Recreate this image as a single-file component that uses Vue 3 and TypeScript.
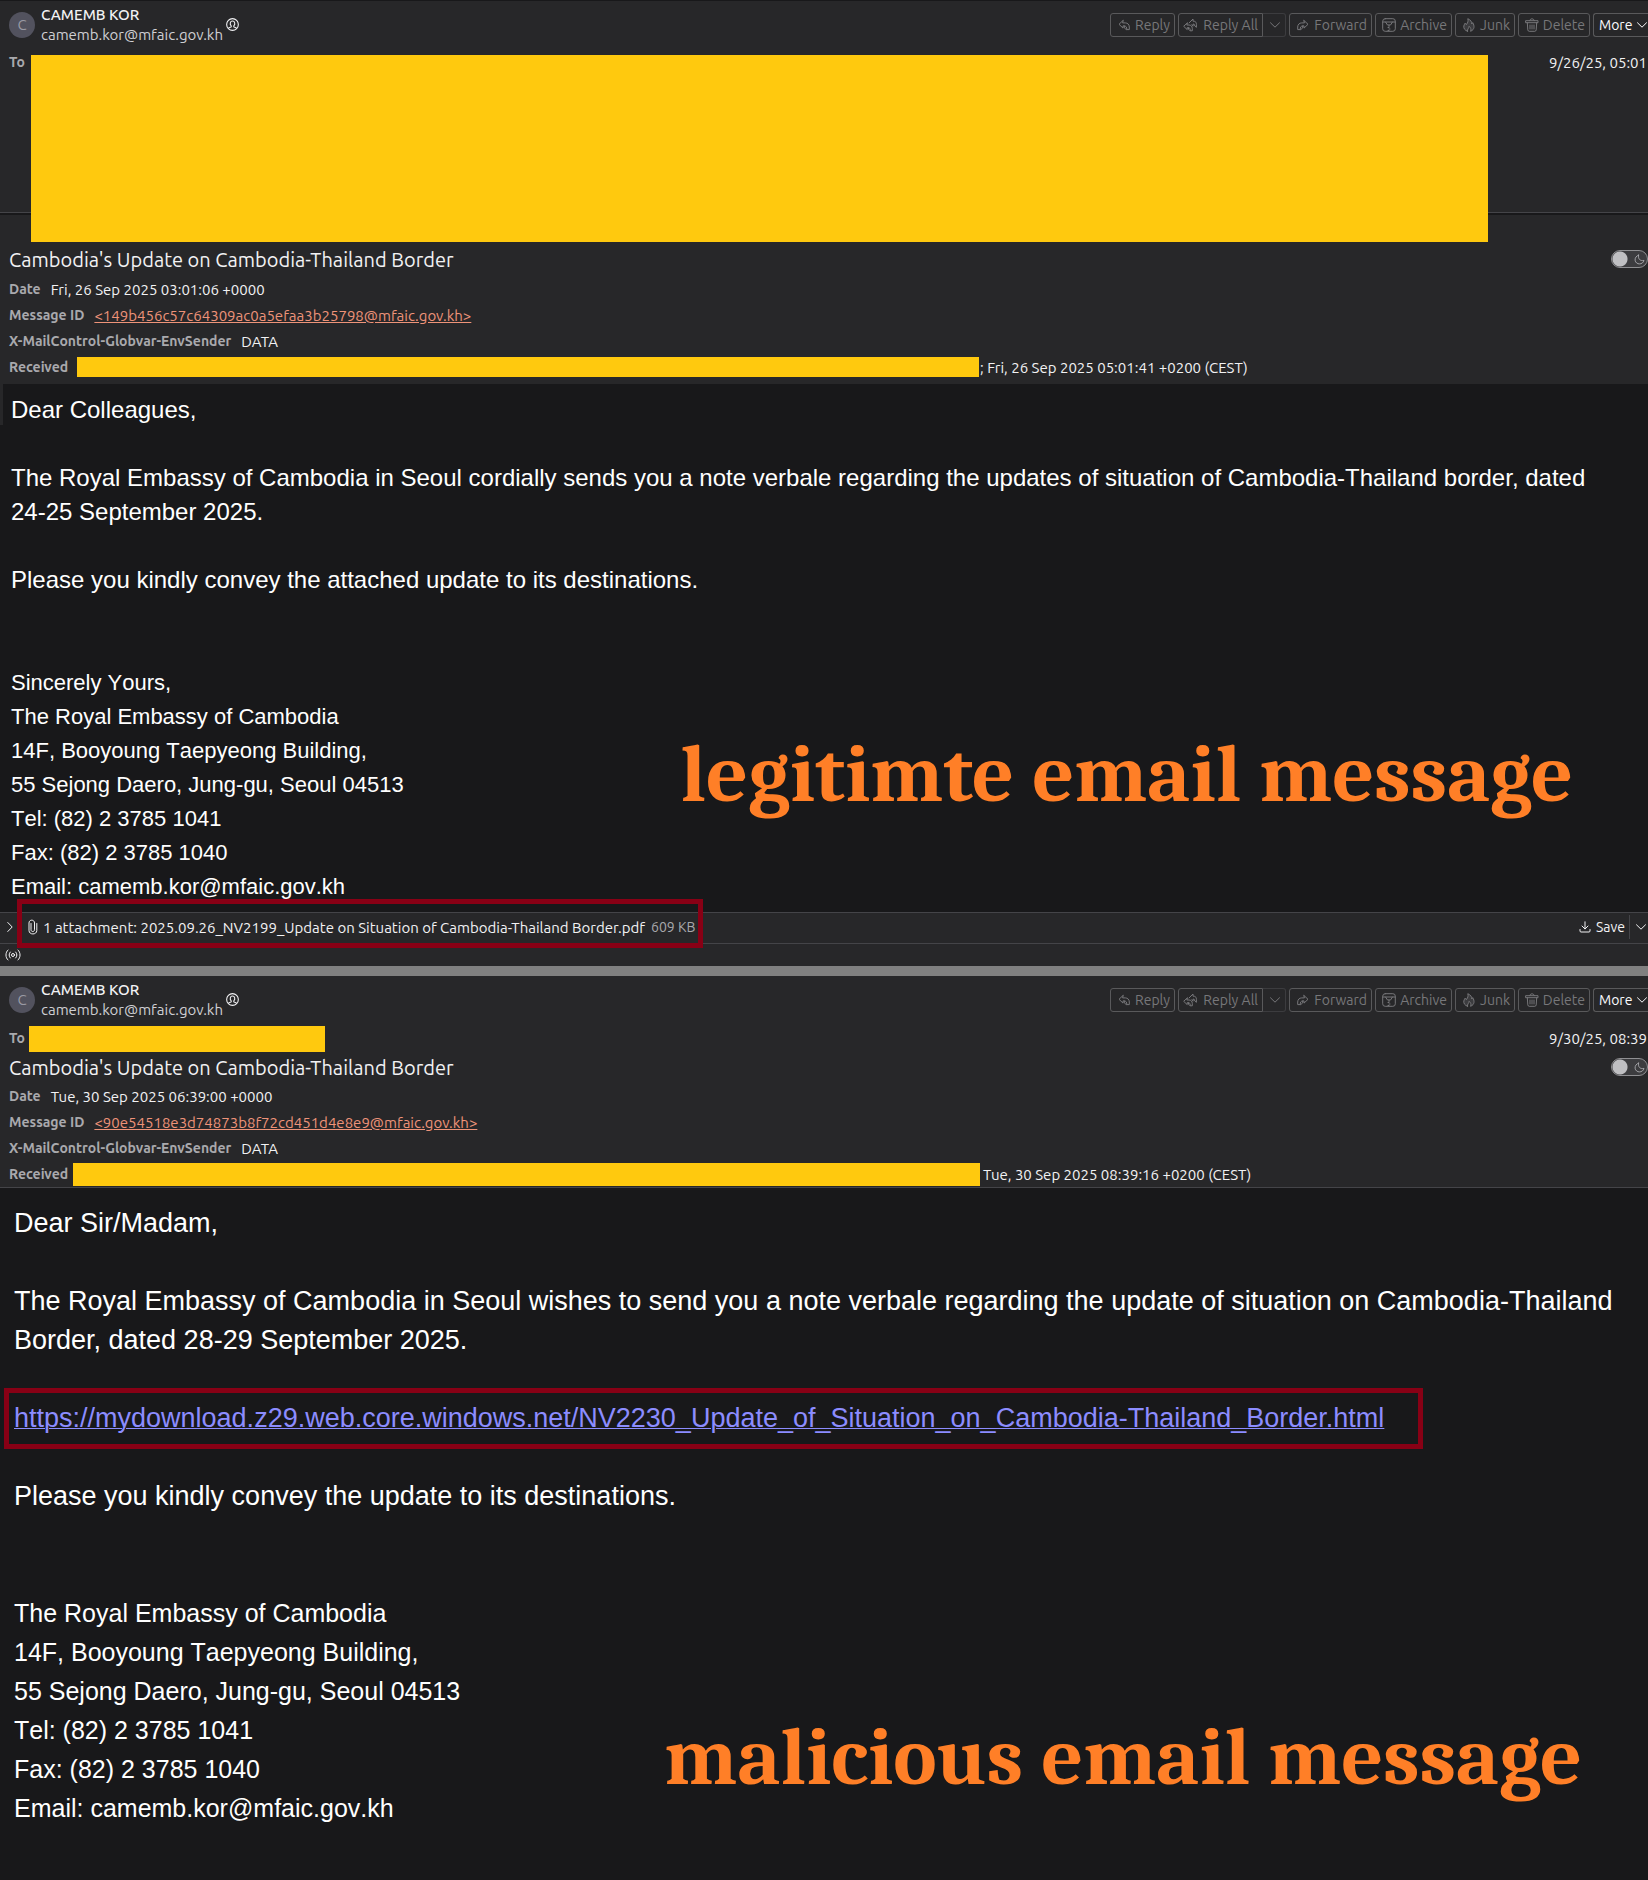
<script setup lang="ts">
interface HeaderField {
  label: string
  value: string
  link?: boolean
}

interface Mail {
  id: string
  variant: 'first' | 'second'
  received: string
  fields: HeaderField[]
  stamp: string
  intro: string[]
  url?: string
  closing: string
  signature: string[]
  attachment?: { name: string; size: string }
  note: string
}

const address = [
  'The Royal Embassy of Cambodia',
  '14F, Booyoung Taepyeong Building,',
  '55 Sejong Daero, Jung-gu, Seoul 04513',
  'Tel: (82) 2 3785 1041',
  'Fax: (82) 2 3785 1040',
  'Email: camemb.kor@mfaic.gov.kh',
]

const mails: Mail[] = [
  {
    id: 'm1',
    variant: 'first',
    received: '9/26/25, 05:01',
    fields: [
      { label: 'Date', value: 'Fri, 26 Sep 2025 03:01:06 +0000' },
      { label: 'Message ID', value: '<149b456c57c64309ac0a5efaa3b25798@mfaic.gov.kh>', link: true },
      { label: 'X-MailControl-Globvar-EnvSender', value: 'DATA' },
    ],
    stamp: '; Fri, 26 Sep 2025 05:01:41 +0200 (CEST)',
    intro: [
      'Dear Colleagues,',
      'The Royal Embassy of Cambodia in Seoul cordially sends you a note verbale regarding the updates of situation of Cambodia-Thailand border, dated 24-25 September 2025.',
    ],
    closing: 'Please you kindly convey the attached update to its destinations.',
    signature: ['Sincerely Yours,', ...address],
    attachment: {
      name: '2025.09.26_NV2199_Update on Situation of Cambodia-Thailand Border.pdf',
      size: '609 KB',
    },
    note: 'legitimte email message',
  },
  {
    id: 'm2',
    variant: 'second',
    received: '9/30/25, 08:39',
    fields: [
      { label: 'Date', value: 'Tue, 30 Sep 2025 06:39:00 +0000' },
      { label: 'Message ID', value: '<90e54518e3d74873b8f72cd451d4e8e9@mfaic.gov.kh>', link: true },
      { label: 'X-MailControl-Globvar-EnvSender', value: 'DATA' },
    ],
    stamp: 'Tue, 30 Sep 2025 08:39:16 +0200 (CEST)',
    intro: [
      'Dear Sir/Madam,',
      'The Royal Embassy of Cambodia in Seoul wishes to send you a note verbale regarding the update of situation on Cambodia-Thailand Border, dated 28-29 September 2025.',
    ],
    url: 'https://mydownload.z29.web.core.windows.net/NV2230_Update_of_Situation_on_Cambodia-Thailand_Border.html',
    closing: 'Please you kindly convey the update to its destinations.',
    signature: address,
    note: 'malicious email message',
  },
]
</script>

<template>
  <main class="page">
    <article v-for="mail in mails" :key="mail.id" class="mail" :class="mail.variant">
      <header class="head">
        <div class="sender">
          <span class="avatar">C</span>
          <div class="who">
            <strong>CAMEMB KOR</strong>
            <span>camemb.kor@mfaic.gov.kh</span>
          </div>
          <svg class="contact" viewBox="0 0 12 12" aria-hidden="true">
            <circle cx="6" cy="6" r="5.400" />
            <path d="M2.400 9.400C3 8.600 4 8.600 4.800 8.200V7.200C3.200 5.600 3.800 2.800 6 2.800S8.800 5.600 7.200 7.200V8.200C8 8.600 9 8.600 9.600 9.400" />
          </svg>
          <div class="tools">
            <button class="btn reply" type="button" disabled>
              <svg viewBox="0 0 14 14"><path d="M6 2.500 2 6.300l4 3.800V7.900h1.300v2l2 1.700h3V9C12.300 6.500 10.500 4.900 8.300 4.900H6ZM7.300 7.900c1.800 0 2.500 1.200 2.500 3.400" /></svg>
              Reply
            </button>
            <span class="split">
              <button class="btn reply-all" type="button" disabled>
                <svg viewBox="0 0 14 14"><path d="M4.200 5 .7 8.300l3.500 3.300V9.700h1.300v1.500l1.600 1.600h2.200v-2.300C9.300 8.300 7.800 7 6 7H4.200ZM5.500 9.700c1.300 0 1.800.8 1.800 2.500M6 5l4-4v2.200h1.200c1.500.3 2.200 1.400 2.200 3.100v3L11.800 8l-.5-1.600L10 6v2.200L8.700 6.800" /></svg>
                Reply All
              </button>
              <button class="btn drop" type="button" disabled aria-label="Reply options">
                <svg viewBox="0 0 12 12"><path d="m1.500 3.800 4.500 4.400 4.500-4.400" /></svg>
              </button>
            </span>
            <button class="btn forward" type="button" disabled>
              <svg viewBox="0 0 14 14"><path d="m8 2.500 4 3.800-4 3.800V7.900H6.700v2l-2 1.700h-3V9C1.700 6.500 3.500 4.900 5.700 4.900H8ZM6.700 7.900c-1.800 0-2.500 1.200-2.500 3.400" /></svg>
              Forward
            </button>
            <button class="btn archive" type="button" disabled>
              <svg viewBox="0 0 14 14"><rect x=".7" y=".7" width="12.600" height="12.600" rx="2.500" /><path d="M.7 4h12.600M3.500 4l2 3h3l2-3M7 7v1.500M6 9.500h1M7 11h1M6 12.500h1" /></svg>
              Archive
            </button>
            <button class="btn junk" type="button" disabled>
              <svg viewBox="0 0 14 14"><path class="tint" d="M5.500 13.300C2.800 12.300 1.500 10.500 1.800 8c.3-1.400 1-2.200 1.500-3 .6.500.9 1 1 1.700C5.800 5 6.500 3 5.800.7c3 1.300 4 3.200 4 5.300l.9-1.400c2 3.200 2 7-2.100 8.700.8-2 .3-3.400-1.500-5C7 10.500 5 11 5.500 13.300Z" /></svg>
              Junk
            </button>
            <button class="btn delete" type="button" disabled>
              <svg viewBox="0 0 14 14"><path d="M1 2.700h12v2H1ZM4.700 2.700c0-2.600 4.600-2.600 4.600 0M2.300 4.700l.5 7.200c.1.900.7 1.400 1.400 1.400h5.600c.7 0 1.300-.5 1.400-1.400l.5-7.200M5 7v4M7 7v4M9 7v4" /></svg>
              Delete
            </button>
            <button class="btn more" type="button">
              More
              <svg viewBox="0 0 12 12"><path d="m1.500 3.800 4.500 4.400 4.500-4.400" /></svg>
            </button>
          </div>
        </div>

        <div class="to-row">
          <b>To</b>
          <span class="redact to-redact"></span>
          <time>{{ mail.received }}</time>
        </div>

        <div class="subject">
          <h2>Cambodia's Update on Cambodia-Thailand Border</h2>
          <label class="switch">
            <input type="checkbox" aria-label="Dark message mode" />
            <svg viewBox="0 0 12 12" aria-hidden="true"><path d="M5 1.200C4 5 6.500 8 10.900 7 9.800 12 2 12.200 1.200 6.800 1 4.200 2.500 2 5 1.200Z" /></svg>
          </label>
        </div>

        <div v-for="f in mail.fields" :key="f.label" class="field">
          <b>{{ f.label }}</b>
          <a v-if="f.link" href="#">{{ f.value }}</a>
          <span v-else>{{ f.value }}</span>
        </div>
        <div class="field received">
          <b>Received</b>
          <span class="redact"></span>
          <span>{{ mail.stamp }}</span>
        </div>
      </header>

      <section class="body">
        <p v-for="line in mail.intro" :key="line">{{ line }}</p>
        <p v-if="mail.url"><a class="url marked" href="#">{{ mail.url }}</a></p>
        <p>{{ mail.closing }}</p>
        <address>
          <span v-for="line in mail.signature" :key="line">{{ line }}</span>
        </address>
        <div class="note">{{ mail.note }}</div>
      </section>

      <footer v-if="mail.attachment">
        <div class="attach-bar">
          <button class="expand" type="button" aria-label="Show attachments">
            <svg viewBox="0 0 12 12"><path d="m3.800 1.500 4.400 4.500-4.400 4.500" /></svg>
          </button>
          <span class="attachment marked">
            <svg class="clip" viewBox="0 0 10 16"><path d="M3 4.500v6.300c0 2.300 3.500 2.300 3.500 0V4C6.500.200 1 .200 1 4v7.500c0 4.600 7.800 4.600 7.800 0V4.500" /></svg>
            <span>1 attachment: {{ mail.attachment.name }}</span>
            <small>{{ mail.attachment.size }}</small>
          </span>
          <button class="save" type="button">
            <svg viewBox="0 0 12 12"><path d="M6 .8v7M3 5l3 3 3-3M1 8.500V10c0 .7.400 1 1 1h8c.6 0 1-.3 1-1V8.500" /></svg>
            Save
          </button>
          <button class="save-drop" type="button" aria-label="Save options">
            <svg viewBox="0 0 12 12"><path d="m1.500 3.800 4.500 4.400 4.500-4.400" /></svg>
          </button>
        </div>
        <div class="status">
          <svg viewBox="0 0 16 12"><circle cx="8" cy="6" r="1.500" /><path d="M5.300 3C3.700 4.500 3.700 7.500 5.300 9M10.700 3c1.600 1.500 1.600 4.500 0 6M3 1C.2 3.500.2 8.500 3 11M13 1c2.800 2.500 2.800 7.500 0 10" /></svg>
        </div>
      </footer>
    </article>
  </main>
</template>

<style>
body {
  margin: 0;
  background: #18181a;
}
</style>

<style scoped>
.page {
  display: flex;
  flex-direction: column;
  min-height: 100vh;
  overflow: hidden;
  color: #f2f2f4;
  background: #18181a;
  font-family: Ubuntu, "Noto Sans", sans-serif;
  font-size: 15px;
}
svg {
  flex: none;
  fill: none;
  stroke: currentColor;
  stroke-linecap: round;
  stroke-linejoin: round;
}
button {
  font: inherit;
  color: inherit;
  background: none;
  border: 0;
  padding: 0;
}
.mail {
  position: relative;
  display: flex;
  flex-direction: column;
}
.second {
  flex: 1;
  border-top: 10px solid #808080;
}
.head {
  background: #272729;
}
.first .head {
  border-top: 1px solid #18181a;
  padding-bottom: 3px;
}
.second .head {
  border-bottom: 1px solid #444448;
}

.sender {
  display: flex;
  align-items: center;
  height: 49px;
  padding: 0 0 2px 9px;
  box-sizing: border-box;
}
.avatar {
  width: 26px;
  height: 26px;
  margin-right: 6px;
  border-radius: 50%;
  background: #52525e;
  color: #9a9aa4;
  line-height: 26px;
  text-align: center;
}
.who {
  display: flex;
  flex-direction: column;
  line-height: 20px;
}
.who strong {
  font-weight: 500;
}
.who span {
  color: #cfcfd3;
}
.contact {
  width: 13px;
  height: 13px;
  margin-left: 3px;
}
.tools {
  display: flex;
  gap: 3px;
  margin-left: auto;
}
.btn {
  display: flex;
  align-items: center;
  justify-content: space-between;
  box-sizing: border-box;
  height: 24px;
  padding: 0 4px 0 6px;
  border: 1px solid #59595b;
  border-radius: 3px;
  color: #77777a;
  font-size: 14px;
  white-space: nowrap;
}
.btn svg {
  width: 14px;
  height: 14px;
}
.tint {
  fill: #3c3c3f;
}
.split {
  display: flex;
}
.reply { width: 65px; }
.reply-all {
  width: 85px;
  padding: 0 4px;
  border-radius: 3px 0 0 3px;
}
.drop {
  width: 23px;
  border-color: #3c3c3f;
  border-left: 0;
  border-radius: 0 3px 3px 0;
}
.btn.drop svg,
.btn.more svg {
  width: 12px;
  height: 12px;
}
.forward { width: 83px; }
.archive { width: 77px; }
.junk { width: 60px; }
.delete { width: 72px; }
.more {
  width: 55px;
  padding: 0 0 0 5px;
  border-right: 0;
  border-radius: 3px 0 0 3px;
  color: #fbfbfe;
}

.to-row {
  display: flex;
  align-items: center;
  height: 24px;
  padding: 0 1px 2px 9px;
}
.first .to-row {
  padding-bottom: 138px;
  border-bottom: 1px solid #444448;
  box-shadow: 0 2px #18181a;
}
.second .to-row {
  margin-top: 1px;
}
b {
  color: #a9a9ad;
  font-size: 14px;
  font-weight: 600;
}
time {
  margin-left: auto;
}
.redact {
  background: #ffc90e;
}
.first .to-redact {
  position: absolute;
  z-index: 1;
  top: 55px;
  left: 31px;
  right: 160px;
  height: 187px;
}
.second .to-redact {
  width: 296px;
  height: 26px;
  margin: 2px 0 0 4px;
}
.subject {
  display: flex;
  align-items: center;
  justify-content: space-between;
  box-sizing: border-box;
  height: 32px;
  padding: 0 0 2px 9px;
}
.first .subject {
  height: 64px;
  padding-top: 30px;
}
h2 {
  margin: 0;
  font-size: 20px;
  font-weight: 400;
}
.switch {
  position: relative;
  display: flex;
  color: #a9a9ad;
}
.switch input {
  appearance: none;
  box-sizing: border-box;
  width: 37px;
  height: 18px;
  margin: 0;
  border: 1px solid #8f8f92;
  border-radius: 9px;
  background: radial-gradient(circle at 8px 8px, #bfbfc2 7px, #3c3c3f 8px);
}
.switch svg {
  position: absolute;
  top: 4px;
  right: 3px;
  width: 11px;
  height: 11px;
}
.field {
  display: flex;
  align-items: center;
  gap: 10px;
  box-sizing: border-box;
  height: 26px;
  padding: 0 0 2px 9px;
  white-space: nowrap;
}
.field a {
  color: #ee9379;
}
.received {
  gap: 0;
}
.received b {
  width: 68px;
}
.received .redact {
  width: 902px;
  height: 20px;
  margin-right: 1px;
}
.second .received {
  height: 25px;
  padding-bottom: 1px;
}
.second .received b {
  width: 64px;
}
.second .received .redact {
  width: 907px;
  height: 23px;
  margin-right: 3px;
}

.body {
  position: relative;
  padding: 9px 32px 8px 11px;
  color: #ffffff;
  font-family: "Liberation Sans", Arial, sans-serif;
  font-size: 24px;
  line-height: 34px;
}
.first .body::before {
  content: "";
  position: absolute;
  top: 0;
  left: 0;
  width: 3px;
  height: 41px;
  background: #272729;
}
.second .body {
  flex: 1;
  padding: 16px 10px 0 14px;
  font-size: 27px;
  line-height: 39px;
}
p {
  margin: 0 0 34px;
}
.second p {
  margin-bottom: 39px;
}
address {
  display: flex;
  flex-direction: column;
  margin-top: 69px;
  font-size: 22px;
  font-style: normal;
  font-kerning: none;
}
.second address {
  margin-top: 78px;
  font-size: 25px;
}
.marked {
  position: relative;
}
.marked::after {
  content: "";
  position: absolute;
  border: 5px solid #880015;
}
.url {
  display: inline-block;
  color: #8c8cff;
  text-decoration-thickness: 1px;
}
.url::after {
  inset: -11px -39px -11px -10px;
}
.note {
  position: absolute;
  right: 75px;
  bottom: 92px;
  color: #ff7f27;
  font-family: Cambria, "DejaVu Serif Condensed", "DejaVu Serif", serif;
  font-size: 82px;
  font-weight: 700;
  line-height: 90px;
  white-space: nowrap;
}
.second .note {
  right: 66px;
  bottom: 77px;
}

footer {
  background: #272729;
}
.attach-bar {
  display: flex;
  align-items: center;
  height: 28px;
  padding-bottom: 2px;
  border-top: 1px solid #444448;
  border-bottom: 1px solid #444448;
}
.attach-bar svg {
  width: 12px;
  height: 12px;
}
.expand {
  display: flex;
  margin: 0 12px 0 4px;
}
.attachment {
  display: flex;
  align-items: center;
  white-space: nowrap;
}
.attachment::after {
  inset: -20px -8px -12px -11px;
}
.attachment .clip {
  width: 10px;
  height: 16px;
  margin-right: 5px;
}
small {
  margin-left: 6px;
  color: #a9a9ad;
  font-size: 14px;
}
.save {
  display: flex;
  align-items: center;
  gap: 5px;
  margin-left: auto;
  font-size: 14px;
}
.save-drop {
  display: flex;
  align-items: center;
  height: 24px;
  margin-left: 4px;
  padding: 0 1px 0 5px;
  border-left: 1px solid #444448;
}
.status {
  display: flex;
  align-items: center;
  height: 22px;
  padding-left: 4px;
}
.status svg {
  width: 18px;
  height: 12px;
}
</style>
